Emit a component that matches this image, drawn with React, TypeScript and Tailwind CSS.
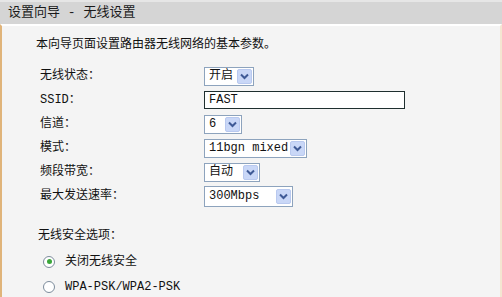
const font = "font-['Liberation_Mono','Noto_Sans_CJK_SC',monospace]";

interface SelectBoxProps {
  value: string;
  width: string;
  tall?: boolean;
}

const Chevron = () => (
  <svg width="9" height="7" viewBox="0 0 9 7">
    <path d="M1 1.5 L4.5 5 L8 1.5" fill="none" stroke="#3f5a96" strokeWidth="2" />
  </svg>
);

const SelectBox = ({ value, width, tall }: SelectBoxProps) => (
  <div
    className={`${width} ${tall ? "h-[21px]" : "h-[19px]"} flex items-center justify-between border border-[#8da3bd] bg-white pl-[4px] pr-[1px]`}
  >
    <span className="text-[12px] leading-none text-[#111]">{value}</span>
    <div className="flex h-[15px] w-[15px] items-center justify-center rounded-[2px] border border-[#b9c9ef] bg-[#c9d7f7]">
      <Chevron />
    </div>
  </div>
);

const Row = ({ label, children }: { label: string; children: React.ReactNode }) => (
  <div className="flex h-[24px] items-center">
    <div className="w-[164px] text-[12px] text-[#111]">{label}</div>
    {children}
  </div>
);

const Radio = ({ checked, label }: { checked?: boolean; label: string }) => (
  <div className="flex h-[25px] items-center pl-[41px]">
    <div className="flex h-[12px] w-[12px] items-center justify-center rounded-full border border-[#7d8c9c] bg-white">
      {checked && <div className="h-[5px] w-[5px] rounded-full bg-[#3aa63a]" />}
    </div>
    <span className="ml-[10px] text-[12px] text-[#111]">{label}</span>
  </div>
);

export default function App() {
  return (
    <div className={`${font} h-[297px] w-[502px] overflow-hidden bg-[#f4f4f4]`}>
      <div className="flex h-[24px] items-center border-t-2 border-[#e6e6e6] bg-[#d5d5d5] pl-[8px] text-[13px] text-[#1a1a1a]">
        设置向导 - 无线设置
      </div>
      <div className="h-[273px] border-l-2 border-r-2 border-t-2 border-l-[#e0b47a] border-r-[#f4e6d2] border-t-white">
        <div className="mt-[11px] pl-[34px] text-[12px] leading-[16px] text-[#111]">
          本向导页面设置路由器无线网络的基本参数。
        </div>
        <div className="mt-[11px] flex flex-col pl-[38px]">
          <Row label="无线状态：">
            <SelectBox value="开启" width="w-[50px]" />
          </Row>
          <Row label="SSID：">
            <div className="flex h-[18px] w-[201px] items-center border border-[#1f2f2f] bg-white pl-[4px] text-[12px] leading-none text-[#111]">
              FAST
            </div>
          </Row>
          <Row label="信道：">
            <SelectBox value="6" width="w-[38px]" />
          </Row>
          <Row label="模式：">
            <SelectBox value="11bgn mixed" width="w-[103px]" />
          </Row>
          <Row label="频段带宽：">
            <SelectBox value="自动" width="w-[56px]" />
          </Row>
          <Row label="最大发送速率：">
            <SelectBox value="300Mbps" width="w-[89px]" tall />
          </Row>
        </div>
        <div className="mt-[20px] pl-[36px] text-[12px] leading-[16px] text-[#111]">无线安全选项：</div>
        <div className="mt-[5px] flex flex-col">
          <Radio checked label="关闭无线安全" />
          <Radio label="WPA-PSK/WPA2-PSK" />
        </div>
      </div>
    </div>
  );
}
